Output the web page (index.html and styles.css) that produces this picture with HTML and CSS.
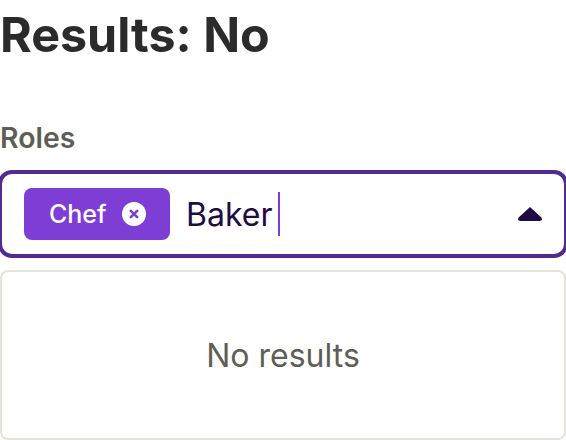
FILE: index.html
```html
<!DOCTYPE html>
<html lang="en">
<head>
  <meta charset="UTF-8" />
  <title>Results</title>
  <link rel="stylesheet" href="styles.css">
</head>
<body>
  <h1 class="results-title">Results: No</h1>
  <div class="field-label">Roles</div>
  <div class="combo">
    <span class="chip">
      <span class="chip-text">Chef</span>
      <svg class="chip-close" viewBox="0 0 24 24" width="24" height="24">
        <circle cx="12" cy="12" r="12" fill="#fff"/>
        <path d="M8.8 8.8l6.4 6.4M15.2 8.8l-6.4 6.4" stroke="#7e3dd4" stroke-width="2.6" stroke-linecap="round"/>
      </svg>
    </span>
    <span class="combo-value">Baker</span>
    <span class="caret"></span>
    <svg class="combo-arrow" viewBox="0 0 24 14" width="24" height="14">
      <path d="M12 0L23.4 10.4Q25 14 21.5 14H2.5Q-1 14 0.6 10.4Z" fill="#210b44"/>
    </svg>
  </div>
  <div class="list-empty">No results</div>
</body>
</html>
```

FILE: styles.css
```css
html, body {
  margin: 0;
  padding: 0;
}
body {
  width: 566px;
  height: 440px;
  overflow: hidden;
  background-color: #fff;
  font-family: Inter, "Liberation Sans", sans-serif;
}
.results-title {
  margin: 0;
  padding-top: 6px;
  font-size: 48.4px;
  line-height: 58px;
  font-weight: 700;
  color: #2b2b2b;
}
.field-label {
  margin-top: 59px;
  font-size: 28.4px;
  line-height: 30px;
  font-weight: 600;
  color: #5f5e54;
}
.combo {
  display: flex;
  align-items: center;
  box-sizing: border-box;
  height: 88px;
  margin: 17px -2px 0;
  padding: 0 22px;
  border: 4px solid #522b91;
  border-radius: 14px;
  background-color: #fff;
}
.chip {
  display: flex;
  align-items: center;
  justify-content: space-between;
  box-sizing: border-box;
  width: 146px;
  height: 52px;
  padding: 0 24px 0 25px;
  border-radius: 8px;
  background-color: #7e3dd4;
}
.chip-text {
  font-size: 25px;
  font-weight: 500;
  color: #fff;
}
.chip-close {
  display: block;
}
.combo-value {
  margin-left: 16px;
  font-size: 32px;
  color: #210b44;
}
.caret {
  width: 2px;
  height: 44px;
  margin-left: 6px;
  background-color: #7e3dd4;
}
.combo-arrow {
  display: block;
  margin-left: auto;
}
.list-empty {
  display: flex;
  align-items: center;
  justify-content: center;
  box-sizing: border-box;
  height: 170px;
  margin-top: 12px;
  border: 2px solid #e6e4d8;
  border-radius: 8px;
  font-size: 32px;
  color: #5f5e54;
}
```
